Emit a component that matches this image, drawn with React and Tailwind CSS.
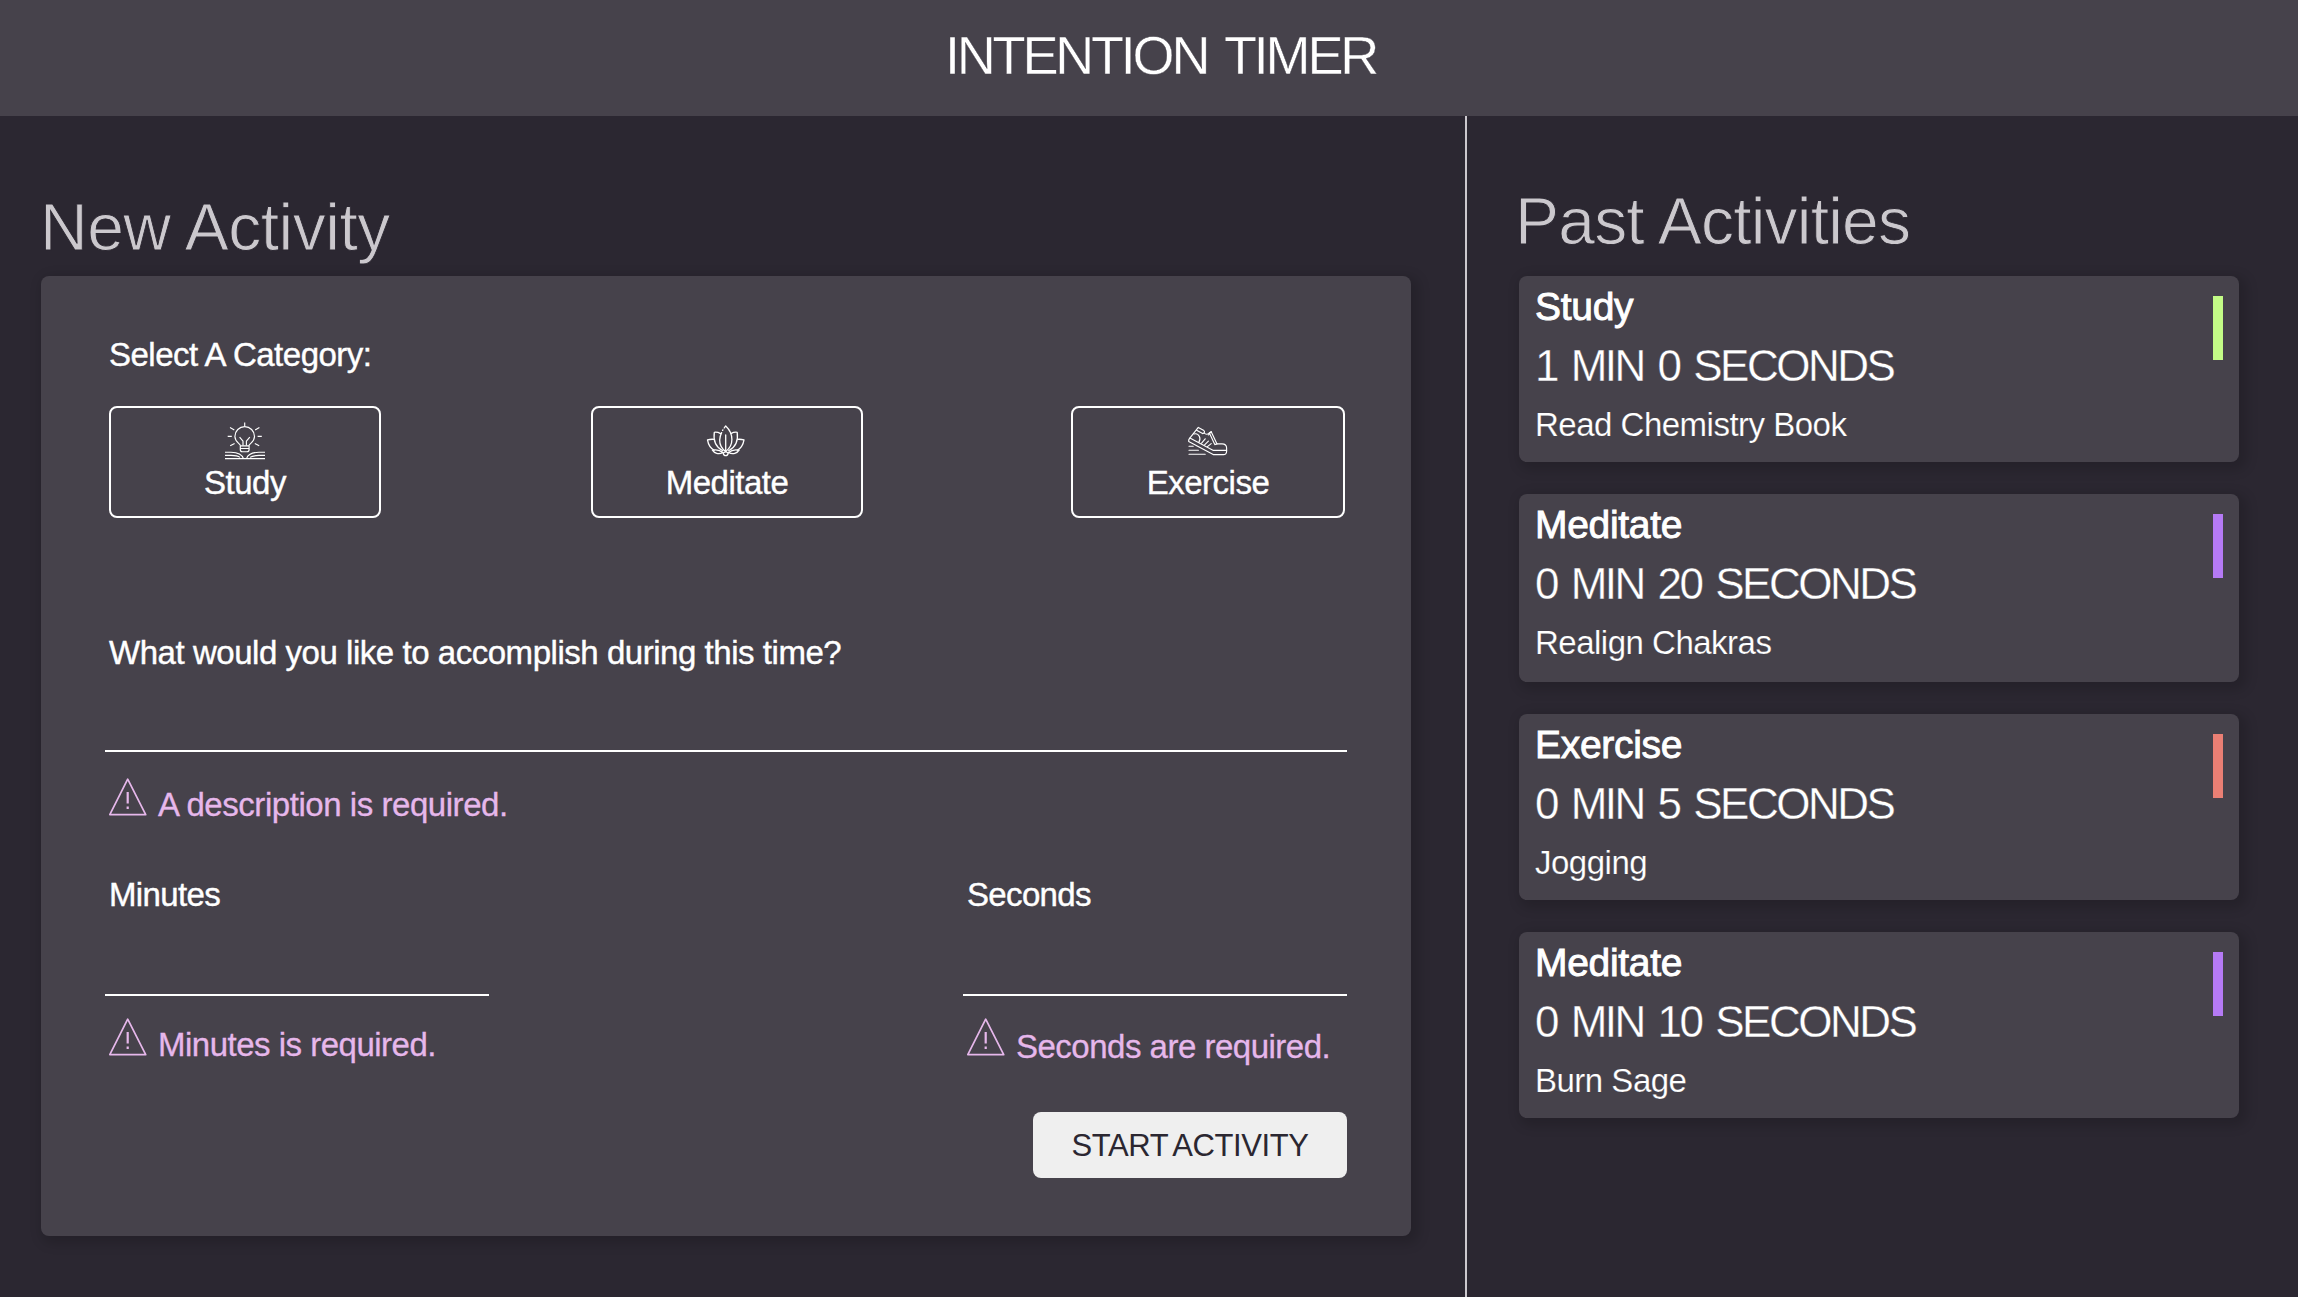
const iconProps = {
  width: 40,
  height: 40,
  viewBox: "0 0 40 40",
  fill: "none",
  stroke: "currentColor",
  strokeLinecap: "round",
  strokeLinejoin: "round",
  className: "block shrink-0 overflow-visible",
};

function StudyIcon() {
  return (
    <svg {...iconProps} strokeWidth="1.15" strokeLinecap="butt">
      <path d="M15.5 24.8 C15.3 22.6 9.9 21 9.9 15.4 A9.8 9.8 0 0 1 29.5 15.4 C29.5 21 24.1 22.6 23.9 24.8" />
      <path d="M15.3 24.8 H24.1 V28.6 Q24 30.7 22 30.7 H17.4 Q15.4 30.7 15.3 28.6 Z M15.3 27.5 H24.1" />
      <path d="M18 24.6 V20.2 L14.6 16.2 M21.4 24.6 V20.2 L24.8 16.2" />
      <path d="M19.7 1.5 V5 M5 6.6 L9.3 9 M34.4 6.6 L30.1 9 M2.7 15.4 H6.8 M32.6 15.4 H36.8 M5.2 24.8 L9.6 22.6 M34.2 24.8 L29.8 22.6" />
      <path d="M0 31.2 H6 C12.5 31.4 17 33 18.5 37.6 M40 31.2 H34 C27.5 31.4 23 33 21.5 37.6" />
      <path d="M0 34.4 H6 C10.5 34.5 13 34.9 15 36.4 M40 34.4 H34 C29.5 34.5 27 34.9 25 36.4" />
      <path d="M0 37.6 H40" strokeWidth="1.4" />
    </svg>
  );
}

function MeditateIcon() {
  return (
    <svg {...iconProps} strokeWidth="1.3">
      <path d="M18.7 30.6 C14.4 27.4 12.6 23.3 12.7 19 C12.8 16.2 13.5 13.8 14.6 11.6 M17.2 7 C17.7 6.2 18.2 5.5 18.7 5 C22.8 8.8 24.9 13.4 24.9 18.6 C24.9 23.3 23 27.4 18.7 30.6 M15.6 9.4 L15.9 8.9" />
      <path d="M18.7 14 V30" />
      <path d="M13.6 12.6 C11.6 11.5 9.4 11 7.3 11.3 C6.3 18 7.7 25.4 15.8 29.8" />
      <path d="M23.9 12.6 C25.9 11.5 28.1 11 30.2 11.3 C31.2 18 29.8 25.4 21.6 29.8" />
      <path d="M6.9 18.3 C4.7 18.1 2.6 18.3 0.5 18.9 C1.3 23.6 3.5 27.3 7.2 29.3" />
      <path d="M30.6 18.3 C32.8 18.1 34.9 18.3 37 18.9 C36.2 23.6 34 27.3 30.3 29.3" />
      <path d="M16 31.5 C12.8 28.9 9.4 28.2 5.4 29.2 C7.2 32.2 11.6 33.9 16 31.5 Z" />
      <path d="M21.5 31.5 C24.7 28.9 28.1 28.2 32.1 29.2 C30.3 32.2 25.9 33.9 21.5 31.5 Z" />
      <path d="M18.7 30.6 L21.3 32 C20.8 33.8 20 34.7 18.7 34.7 C17.4 34.7 16.6 33.8 16.1 32 Z" />
    </svg>
  );
}

function ExerciseIcon() {
  return (
    <svg {...iconProps} strokeWidth="1.15">
      <path d="M10.3 6.4 L15.9 9.6 Q17 10.4 16.2 12 Q18.4 14.6 21.4 11.8 L23.2 10.7 L29 22.9 H34 Q38.6 23 38.6 27 V30.5 Q38.5 33.6 35.4 33.6 H25.2 L0.7 20.4 Q0.4 18.9 1.4 17.6 Z" />
      <path d="M1.9 17 L25.4 29.4 H38.6" />
      <path d="M8.6 9.3 L14.6 12.6 L16.2 12 M6 13 Q9.6 12 11.4 15.6 Q12.8 18.4 10.8 21.4" />
      <path d="M21.4 12 L26.8 23.6 L29 22.9 M23.2 10.7 L20.4 14" />
      <path d="M17.2 17.8 L13.6 22.2 M20.4 20.2 L16.6 23.8 M23.2 22.6 L19.4 25.6" />
      <path d="M1 25.2 H5.2 M1 29.2 H10.4 M1 33.2 H17.2" />
    </svg>
  );
}

function WarningIcon() {
  return (
    <svg width="38" height="38" viewBox="0 0 38 38" fill="none" stroke="currentColor" strokeWidth="1.7" strokeLinejoin="round" className="block shrink-0">
      <path d="M18.7 1.2 L36.7 36.7 H0.8 Z" />
      <path d="M18.7 14 V25.6 M18.7 28.4 V31" strokeWidth="2.2" />
    </svg>
  );
}

function CategoryButton({ label, icon, className }) {
  return (
    <button
      type="button"
      className={`flex h-[112px] shrink-0 flex-col items-center rounded-lg border-2 border-white pt-[13px] text-[33px] leading-10 ${className}`}
    >
      {icon}
      <span className="mt-0.5 [-webkit-text-stroke:0.4px_white]">{label}</span>
    </button>
  );
}

function ErrorMessage({ text, className = "" }) {
  return (
    <div className="flex h-[46px] items-start gap-[11px] pl-1 text-[#e6b7eb]">
      <WarningIcon />
      <p className={`whitespace-nowrap [-webkit-text-stroke:0.3px_#e6b7eb] ${className}`}>{text}</p>
    </div>
  );
}

function TimeField({ label, error, errorClass }) {
  return (
    <div className="flex w-[384px] flex-col">
      <label className="pl-1 tracking-[-0.65px] [-webkit-text-stroke:0.4px_white]">{label}</label>
      <input className="mb-[22px] h-[81px] w-full border-b-2 border-white bg-transparent outline-none" />
      <ErrorMessage text={error} className={errorClass} />
    </div>
  );
}

const pastActivities = [
  { category: "Study", time: "1 MIN 0 SECONDS", goal: "Read Chemistry Book", height: "h-[186px]", bar: "bg-[#c3fb86]" },
  { category: "Meditate", time: "0 MIN 20 SECONDS", goal: "Realign Chakras", height: "h-[188px]", bar: "bg-[#b57af5]" },
  { category: "Exercise", time: "0 MIN 5 SECONDS", goal: "Jogging", height: "h-[186px]", bar: "bg-[#ea7f74]" },
  { category: "Meditate", time: "0 MIN 10 SECONDS", goal: "Burn Sage", height: "h-[186px]", bar: "bg-[#b57af5]" },
];

function PastCard({ category, time, goal, height, bar }) {
  return (
    <article
      className={`flex w-[720px] justify-between rounded-lg bg-[#46424b] pr-4 pl-4 shadow-[4px_4px_12px_4px_rgba(0,0,0,0.15)] ${height}`}
    >
      <div className="whitespace-nowrap">
        <h3 className="mt-2 text-[39px] leading-[46px] tracking-[-0.3px] [-webkit-text-stroke:0.9px_white]">{category}</h3>
        <p className="mt-[11px] text-[44px] leading-[50px] tracking-[-2.5px] [word-spacing:4px] [-webkit-text-stroke:0.35px_#46424b]">{time}</p>
        <p className="mt-[14px] text-[33px] leading-10 tracking-[-0.5px] [-webkit-text-stroke:0.2px_#46424b]">{goal}</p>
      </div>
      <div className={`mt-5 h-16 w-2.5 ${bar}`} />
    </article>
  );
}

export default function App() {
  return (
    <div className="flex h-[1297px] w-[2298px] flex-col overflow-hidden bg-[#2b2731] font-['Liberation_Sans',Arial,sans-serif] text-white">
      <header className="h-[116px] shrink-0 bg-[#46424b] pl-[945px]">
        <h1 className="text-[54px] leading-[111px] tracking-[-3.2px] whitespace-nowrap [word-spacing:6px] [-webkit-text-stroke:0.4px_#46424b]">INTENTION TIMER</h1>
      </header>
      <main className="flex flex-1">
        <section className="w-[1465px] shrink-0 pt-[71px] pl-[41px]">
          <h2 className="-ml-px text-[66px] leading-[80px] tracking-[-0.5px] text-[#cbc8cd] [-webkit-text-stroke:0.9px_#2b2731]">New Activity</h2>
          <form className="mt-[9px] flex h-[960px] w-[1370px] flex-col rounded-lg bg-[#46424b] px-16 pt-[59px] text-[33px] leading-10 tracking-[-0.5px] shadow-[4px_4px_12px_4px_rgba(0,0,0,0.15)]">
            <p className="pl-1 [-webkit-text-stroke:0.4px_white]">Select A Category:</p>
            <div className="mt-[31px] flex gap-[208px] pl-1">
              <CategoryButton label="Study" icon={<StudyIcon />} className="mr-0.5 w-[272px]" />
              <CategoryButton label="Meditate" icon={<MeditateIcon />} className="w-[272px]" />
              <CategoryButton label="Exercise" icon={<ExerciseIcon />} className="w-[274px]" />
            </div>
            <label className="mt-[115px] pl-1 tracking-[-0.46px] [-webkit-text-stroke:0.4px_white]">What would you like to accomplish during this time?</label>
            <input className="mb-[26px] h-[79px] w-full shrink-0 border-b-2 border-white bg-transparent outline-none" />
            <ErrorMessage text="A description is required." className="mt-[7px] tracking-[-0.45px]" />
            <div className="mt-[51px] flex justify-between">
              <TimeField label="Minutes" error="Minutes is required." errorClass="mt-[7px] tracking-[-0.5px]" />
              <TimeField label="Seconds" error="Seconds are required." errorClass="mt-[9px] tracking-[-0.5px]" />
            </div>
            <button
              type="button"
              className="mt-12 h-[66px] w-[314px] self-end rounded-lg bg-[#efefef] pt-0.5 text-[31px] tracking-[-0.4px] text-[#2b2731] [word-spacing:-2px]"
            >
              START ACTIVITY
            </button>
          </form>
        </section>
        <aside className="flex-1 border-l-2 border-[#cbc8cd] pt-[65px] pl-[52px]">
          <h2 className="-ml-1 text-[66px] leading-[80px] tracking-[-0.8px] text-[#cbc8cd] [-webkit-text-stroke:0.9px_#2b2731]">Past Activities</h2>
          <div className="mt-[15px] flex flex-col gap-8">
            {pastActivities.map((activity, index) => (
              <PastCard key={index} {...activity} />
            ))}
          </div>
        </aside>
      </main>
    </div>
  );
}
